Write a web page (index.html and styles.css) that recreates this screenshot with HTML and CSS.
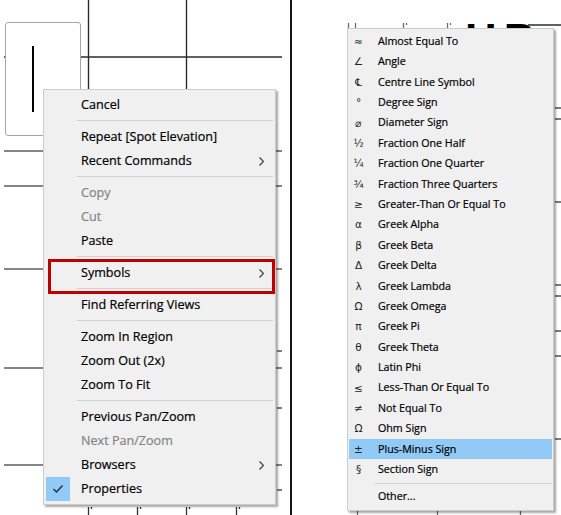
FILE: index.html
```html
<!DOCTYPE html>
<html lang="en">
<head>
<meta charset="utf-8">
<title>Context menu and Symbols submenu</title>
<link rel="stylesheet" href="styles.css">
</head>
<body>
<div class="page">
  <section class="panel panel-left">
    <svg class="drawing" width="290" height="515" viewBox="0 0 290 515">
      <g class="grid">
        <line x1="88.5" y1="0" x2="88.5" y2="92"/>
        <line x1="186.5" y1="0" x2="186.5" y2="92"/>
        <line x1="4" y1="57" x2="282" y2="57"/>
      </g>
      <rect class="frame" x="5.5" y="22.5" width="75" height="113" rx="2.5"/>
      <line class="stem" x1="33" y1="46" x2="33" y2="112"/>
      <g class="grid grid-soft">
        <line x1="4" y1="151" x2="282" y2="151"/>
        <line x1="4" y1="186" x2="282" y2="186"/>
        <line x1="4" y1="269" x2="282" y2="269"/>
        <line x1="4" y1="368" x2="282" y2="368"/>
        <line x1="4" y1="465" x2="282" y2="465"/>
        <line x1="277" y1="351" x2="282" y2="351"/>
        <line x1="277" y1="408" x2="282" y2="408"/>
        <line x1="277" y1="490" x2="282" y2="490"/>
      </g>
      <g class="ticks">
        <line x1="88.5" y1="507" x2="88.5" y2="515"/><line x1="91.5" y1="507" x2="91.5" y2="509"/>
        <line x1="137.5" y1="507" x2="137.5" y2="515"/><line x1="140.5" y1="507" x2="140.5" y2="509"/>
        <line x1="186.5" y1="507" x2="186.5" y2="515"/><line x1="189.5" y1="507" x2="189.5" y2="509"/>
        <line x1="236.5" y1="507" x2="236.5" y2="515"/><line x1="239.5" y1="507" x2="239.5" y2="509"/>
      </g>
    </svg>

    <div class="menu menu-main">
      <div class="item"><span class="gutter"></span><span class="label">Cancel</span></div>
      <div class="sep"></div>
      <div class="item"><span class="gutter"></span><span class="label">Repeat [Spot Elevation]</span></div>
      <div class="item"><span class="gutter"></span><span class="label">Recent Commands</span><svg class="chev" width="5" height="9" viewBox="0 0 5 9"><polyline points="0.5,0.5 4.5,4.5 0.5,8.5"/></svg></div>
      <div class="sep"></div>
      <div class="item is-disabled"><span class="gutter"></span><span class="label">Copy</span></div>
      <div class="item is-disabled"><span class="gutter"></span><span class="label">Cut</span></div>
      <div class="item"><span class="gutter"></span><span class="label">Paste</span></div>
      <div class="sep"></div>
      <div class="item"><span class="gutter"></span><span class="label">Symbols</span><svg class="chev" width="5" height="9" viewBox="0 0 5 9"><polyline points="0.5,0.5 4.5,4.5 0.5,8.5"/></svg></div>
      <div class="sep"></div>
      <div class="item"><span class="gutter"></span><span class="label">Find Referring Views</span></div>
      <div class="sep"></div>
      <div class="item"><span class="gutter"></span><span class="label">Zoom In Region</span></div>
      <div class="item"><span class="gutter"></span><span class="label">Zoom Out (2x)</span></div>
      <div class="item"><span class="gutter"></span><span class="label">Zoom To Fit</span></div>
      <div class="sep"></div>
      <div class="item"><span class="gutter"></span><span class="label">Previous Pan/Zoom</span></div>
      <div class="item is-disabled"><span class="gutter"></span><span class="label">Next Pan/Zoom</span></div>
      <div class="item"><span class="gutter"></span><span class="label">Browsers</span><svg class="chev" width="5" height="9" viewBox="0 0 5 9"><polyline points="0.5,0.5 4.5,4.5 0.5,8.5"/></svg></div>
      <div class="item"><span class="gutter is-checked"><svg class="check" width="24" height="24" viewBox="0 0 24 24"><polyline points="7.5,12 10.5,15 16.5,8.5"/></svg></span><span class="label">Properties</span></div>
    </div>
    <div class="callout"></div>
  </section>

  <div class="divider"></div>

  <section class="panel panel-right">
    <svg class="drawing" width="269" height="515" viewBox="0 0 269 515">
      <text class="big-text" x="173" y="54.5">HB</text>
      <g class="grid">
        <line x1="236" y1="25" x2="269" y2="25"/>
      </g>
      <g class="grid grid-soft">
        <line x1="263" y1="108" x2="269" y2="108"/>
        <line x1="263" y1="119" x2="269" y2="119"/>
        <line x1="263" y1="202" x2="269" y2="202"/>
        <line x1="263" y1="285" x2="269" y2="285"/>
        <line x1="263" y1="296" x2="269" y2="296"/>
        <line x1="263" y1="331" x2="269" y2="331"/>
        <line x1="263" y1="356" x2="269" y2="356"/>
        <line x1="263" y1="439" x2="269" y2="439"/>
      </g>
      <g class="ticks ticks-soft">
        <line x1="56.5" y1="23" x2="56.5" y2="29"/><line x1="63.5" y1="23" x2="63.5" y2="29"/>
        <line x1="111.5" y1="23" x2="111.5" y2="29"/><line x1="114.5" y1="23" x2="114.5" y2="25"/>
        <line x1="155.5" y1="23" x2="155.5" y2="29"/><line x1="158.5" y1="23" x2="158.5" y2="25"/>
        <line x1="65.5" y1="511" x2="65.5" y2="515"/>
        <line x1="145.5" y1="511" x2="145.5" y2="515"/>
        <line x1="228.5" y1="511" x2="228.5" y2="515"/>
      </g>
    </svg>

    <div class="menu menu-symbols">
      <div class="sym-item"><span class="sym">≈</span><span class="label">Almost Equal To</span></div>
      <div class="sym-item"><span class="sym">∠</span><span class="label">Angle</span></div>
      <div class="sym-item"><span class="sym">℄</span><span class="label">Centre Line Symbol</span></div>
      <div class="sym-item"><span class="sym">°</span><span class="label">Degree Sign</span></div>
      <div class="sym-item"><span class="sym">⌀</span><span class="label">Diameter Sign</span></div>
      <div class="sym-item"><span class="sym">½</span><span class="label">Fraction One Half</span></div>
      <div class="sym-item"><span class="sym">¼</span><span class="label">Fraction One Quarter</span></div>
      <div class="sym-item"><span class="sym">¾</span><span class="label">Fraction Three Quarters</span></div>
      <div class="sym-item"><span class="sym">≥</span><span class="label">Greater-Than Or Equal To</span></div>
      <div class="sym-item"><span class="sym">α</span><span class="label">Greek Alpha</span></div>
      <div class="sym-item"><span class="sym">β</span><span class="label">Greek Beta</span></div>
      <div class="sym-item"><span class="sym">Δ</span><span class="label">Greek Delta</span></div>
      <div class="sym-item"><span class="sym">λ</span><span class="label">Greek Lambda</span></div>
      <div class="sym-item"><span class="sym">Ω</span><span class="label">Greek Omega</span></div>
      <div class="sym-item"><span class="sym">π</span><span class="label">Greek Pi</span></div>
      <div class="sym-item"><span class="sym">θ</span><span class="label">Greek Theta</span></div>
      <div class="sym-item"><span class="sym">ɸ</span><span class="label">Latin Phi</span></div>
      <div class="sym-item"><span class="sym">≤</span><span class="label">Less-Than Or Equal To</span></div>
      <div class="sym-item"><span class="sym">≠</span><span class="label">Not Equal To</span></div>
      <div class="sym-item"><span class="sym">Ω</span><span class="label">Ohm Sign</span></div>
      <div class="sym-item is-hover"><span class="sym">±</span><span class="label">Plus-Minus Sign</span></div>
      <div class="sym-item"><span class="sym">§</span><span class="label">Section Sign</span></div>
      <div class="sym-sep"></div>
      <div class="sym-item"><span class="sym"></span><span class="label">Other...</span></div>
    </div>
  </section>
</div>
</body>
</html>
```

FILE: styles.css
```css
* { box-sizing: border-box; }

html, body {
  margin: 0;
  padding: 0;
  background: #ffffff;
}

body {
  font-family: "Open Sans", "Noto Sans", "Liberation Sans", sans-serif;
  color: #000;
}

.page {
  display: flex;
  width: 561px;
  height: 515px;
  overflow: hidden;
  background: #fff;
}

.panel {
  position: relative;
  height: 515px;
  flex: none;
}

.panel-left { width: 290px; }
.panel-right { width: 269px; }

.divider {
  width: 2px;
  flex: none;
  background: #141414;
}

.drawing {
  display: block;
}

.grid line {
  stroke: #2b2b2b;
  stroke-width: 1.4;
}

.grid-soft line {
  stroke: #5c5c5c;
  stroke-width: 1.6;
}

.frame {
  fill: #ffffff;
  stroke: #a6a6a6;
  stroke-width: 1;
}

.stem {
  stroke: #000;
  stroke-width: 2;
}

.ticks line {
  stroke: #333;
  stroke-width: 1.3;
}

.ticks-soft line {
  stroke: #6a6a6a;
}

.big-text {
  font-family: "Liberation Sans", Arial, sans-serif;
  font-weight: bold;
  font-size: 44px;
  letter-spacing: 7px;
  fill: #000;
}

/* ---------- menus ---------- */
.menu {
  position: absolute;
  background: #f0f0f0;
  border: 1px solid #cccccc;
  box-shadow: 2px 2px 2px rgba(0, 0, 0, 0.35);
}

.menu .label {
  -webkit-text-stroke: 0.2px currentColor;
}

.menu-main {
  left: 43px;
  top: 89px;
  width: 233px;
  padding: 3px 0;
  font-size: 12.6px;
}

.item {
  display: flex;
  align-items: center;
  height: 24px;
  padding-left: 2px;
  padding-right: 11px;
}

.gutter {
  width: 24px;
  height: 24px;
  flex: none;
  margin-right: 11px;
}

.gutter.is-checked {
  background: #91c9f7;
}

.check {
  display: block;
}

.check polyline {
  fill: none;
  stroke: #2c2c2c;
  stroke-width: 1.4;
}

.label {
  flex: 1;
  white-space: nowrap;
  line-height: 1;
}

.is-disabled .label {
  color: #848484;
}

.chev {
  display: block;
  flex: none;
}

.chev polyline {
  fill: none;
  stroke: #3a3a3a;
  stroke-width: 1.2;
}

.sep {
  height: 8px;
  position: relative;
  margin: 0 2px 0 33px;
}

.sep::after {
  content: "";
  position: absolute;
  left: 0;
  right: 0;
  top: 3px;
  height: 1px;
  background: #d2d2d2;
}

.callout {
  position: absolute;
  left: 48px;
  top: 259px;
  width: 227px;
  height: 35px;
  border: 3px solid #c00000;
}

/* ---------- symbols submenu ---------- */
.menu-symbols {
  left: 55px;
  top: 28px;
  width: 207px;
  padding: 2px 0 3px;
  font-size: 10.7px;
}

.sym-item {
  display: flex;
  align-items: center;
  height: 20.4px;
  margin: 0 1px;
}

.sym-item.is-hover {
  background: #91c9f7;
}

.sym {
  width: 19px;
  flex: none;
  text-align: center;
  font-family: "DejaVu Sans", sans-serif;
  font-size: 10.5px;
  color: #222;
  margin-right: 10px;
  line-height: 1;
}

.sym-sep {
  height: 7px;
  position: relative;
  margin: 0 1px 0 27px;
}

.sym-sep::after {
  content: "";
  position: absolute;
  left: 0;
  right: 0;
  top: 3px;
  height: 1px;
  background: #d2d2d2;
}
```
